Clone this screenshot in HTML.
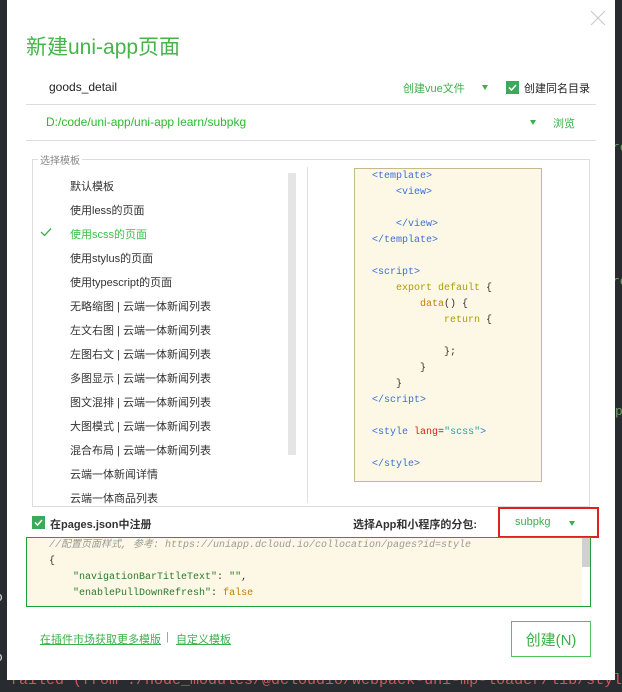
<!DOCTYPE html>
<html><head><meta charset="utf-8"><style>
*{margin:0;padding:0;box-sizing:border-box}
body{width:622px;height:692px;background:#282b30;position:relative;overflow:hidden;font-family:"Liberation Sans","Noto Sans CJK SC",sans-serif;font-size:11px;color:#333}
.a{position:absolute;white-space:nowrap}
.dlg{position:absolute;left:7px;top:0;width:608px;height:680px;background:#fff}
.g{color:#3cb04a}
.mono{font-family:"Liberation Mono","DejaVu Sans Mono","Noto Sans CJK SC",monospace}
.tri{width:0;height:0;border-left:3.5px solid transparent;border-right:3.5px solid transparent;border-top:5px solid #3cb04a}
.cb{width:13px;height:13px;background:#3caa5a}
.li{left:70px;font-size:11px;color:#333}
.tg{color:#3a6fd8}.kw{color:#a8a000}.fn{color:#c08000}
</style></head><body>
<div class="a mono" style="left:598px;top:4px;color:#a89060;font-size:13px">r</div>
<div class="a mono" style="left:612px;top:140px;color:#6aa060;font-size:13px">re</div>
<div class="a mono" style="left:612px;top:274px;color:#6aa060;font-size:13px">re</div>
<div class="a mono" style="left:615px;top:404px;color:#6aa060;font-size:13px">p</div>
<div class="a mono" style="left:-5px;top:590px;color:#ddd;font-size:13px">o</div>
<div class="a mono" style="left:-5px;top:650px;color:#ddd;font-size:13px">o</div>
<div class="a mono" style="left:10px;top:672px;width:612px;overflow:hidden;color:#c85a5a;font-size:15px">failed (from ./node_modules/@dcloudio/webpack-uni-mp-loader/lib/styl</div>
<div class="dlg"></div>
<svg class="a" style="left:590px;top:10px" width="16" height="16"><path d="M1 1L15 15M15 1L1 15" stroke="#c8c8c8" stroke-width="1"/></svg>
<div class="a g" style="left:26px;top:31px;font-size:21px;color:#46b44a">新建uni-app页面</div>
<div class="a" style="left:49px;top:80px;font-size:12px;color:#222">goods_detail</div>
<div class="a g" style="left:403px;top:80px;font-size:11px">创建vue文件</div>
<div class="a tri" style="left:482px;top:85px"></div>
<div class="a cb" style="left:506px;top:81px"></div>
<svg class="a" style="left:506px;top:81px" width="13" height="13"><path d="M3 6.5L5.5 9L10 4" stroke="#fff" stroke-width="1.5" fill="none"/></svg>
<div class="a" style="left:524px;top:80px;font-size:11px;color:#222">创建同名目录</div>
<div class="a" style="left:26px;top:104px;width:570px;height:1px;background:#ddd"></div>
<div class="a" style="left:46px;top:115px;font-size:12px;color:#2db830">D:/code/uni-app/uni-app learn/subpkg</div>
<div class="a tri" style="left:530px;top:120px"></div>
<div class="a g" style="left:553px;top:115px;font-size:11px">浏览</div>
<div class="a" style="left:26px;top:140px;width:570px;height:1px;background:#ddd"></div>
<div class="a" style="left:32px;top:159px;width:558px;height:348px;border:1px solid #ddd"></div>
<div class="a" style="left:38px;top:152px;background:#fff;padding:0 2px;font-size:10px;color:#888">选择模板</div>
<div class="a li" style="top:178px">默认模板</div>
<div class="a li" style="top:202px">使用less的页面</div>
<svg class="a" style="left:40px;top:227px" width="12" height="10"><path d="M1 5L4.5 8.5L11 1.5" stroke="#3cb04a" stroke-width="1.3" fill="none"/></svg>
<div class="a li g" style="top:226px;color:#3cc04a">使用scss的页面</div>
<div class="a li" style="top:250px">使用stylus的页面</div>
<div class="a li" style="top:274px">使用typescript的页面</div>
<div class="a li" style="top:298px">无略缩图 | 云端一体新闻列表</div>
<div class="a li" style="top:322px">左文右图 | 云端一体新闻列表</div>
<div class="a li" style="top:346px">左图右文 | 云端一体新闻列表</div>
<div class="a li" style="top:370px">多图显示 | 云端一体新闻列表</div>
<div class="a li" style="top:394px">图文混排 | 云端一体新闻列表</div>
<div class="a li" style="top:418px">大图模式 | 云端一体新闻列表</div>
<div class="a li" style="top:442px">混合布局 | 云端一体新闻列表</div>
<div class="a li" style="top:466px">云端一体新闻详情</div>
<div class="a li" style="top:490px">云端一体商品列表</div>
<div class="a" style="left:288px;top:173px;width:8px;height:282px;background:#e5e5e5"></div>
<div class="a" style="left:307px;top:167px;width:1px;height:336px;background:#e0e0e0"></div>
<div class="a" style="left:354px;top:168px;width:188px;height:314px;background:#fdf8e6;border:1px solid #c8b98a"></div>
<div class="a mono" style="left:372px;top:169px;font-size:10px;line-height:16px;white-space:pre"><span class="tg">&lt;template&gt;</span>
    <span class="tg">&lt;view&gt;</span>

    <span class="tg">&lt;/view&gt;</span>
<span class="tg">&lt;/template&gt;</span>

<span class="tg">&lt;script&gt;</span>
    <span class="kw">export default</span> {
        <span class="fn">data</span>() {
            <span class="kw">return</span> {

            };
        }
    }
<span class="tg">&lt;/script&gt;</span>

<span class="tg">&lt;style</span> <span style="color:#d02020">lang</span>=<span style="color:#20a0a0">"scss"</span><span class="tg">&gt;</span>

<span class="tg">&lt;/style&gt;</span></div>
<div class="a cb" style="left:32px;top:516px"></div>
<svg class="a" style="left:32px;top:516px" width="13" height="13"><path d="M3 6.5L5.5 9L10 4" stroke="#fff" stroke-width="1.5" fill="none"/></svg>
<div class="a" style="left:50px;top:516px;font-size:11px;font-weight:bold;color:#333">在pages.json中注册</div>
<div class="a" style="left:353px;top:516px;font-size:11px;font-weight:bold;color:#333">选择App和小程序的分包:</div>
<div class="a" style="left:498px;top:507px;width:101px;height:31px;border:2px solid #e02020"></div>
<div class="a g" style="left:515px;top:516px;font-size:11px">subpkg</div>
<div class="a tri" style="left:569px;top:521px"></div>
<div class="a" style="left:26px;top:537px;width:565px;height:70px;background:#fdf8e6;border:1px solid #1e9e3c;overflow:hidden"></div>
<div class="a" style="left:582px;top:538px;width:8px;height:68px;background:#fff"></div>
<div class="a" style="left:582px;top:538px;width:8px;height:29px;background:#cfd0d4"></div>
<div class="a mono" style="left:49px;top:538px;font-size:10px;line-height:16px;white-space:pre;color:#333"><span style="color:#999;font-style:italic">//配置页面样式, 参考: https://uniapp.dcloud.io/collocation/pages?id=style</span>
{
    <span style="color:#2a7a2a">"navigationBarTitleText"</span>: <span style="color:#2a7a2a">""</span>,
    <span style="color:#2a7a2a">"enablePullDownRefresh"</span>: <span style="color:#c08000">false</span></div>
<div class="a g" style="left:40px;top:631px;font-size:11px;text-decoration:underline">在插件市场获取更多模版</div>
<div class="a" style="left:166px;top:631px;font-size:11px;color:#999">|</div>
<div class="a g" style="left:176px;top:631px;font-size:11px;text-decoration:underline">自定义模板</div>
<div class="a" style="left:511px;top:621px;width:80px;height:36px;border:1px solid #4cc45c"></div>
<div class="a g" style="left:511px;top:629px;width:80px;text-align:center;font-size:15px">创建(N)</div>
</body></html>
